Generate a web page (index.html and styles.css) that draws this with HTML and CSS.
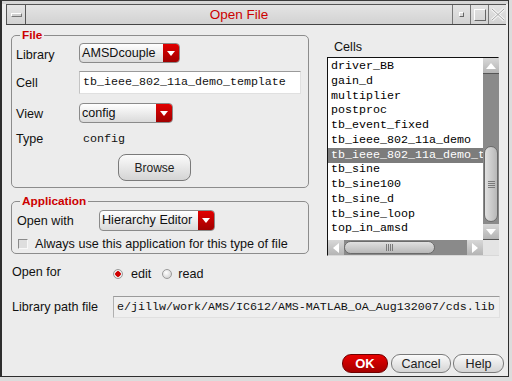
FILE: index.html
```
<!DOCTYPE html>
<html lang="en">
<head>
    <meta charset="UTF-8">
    <title>Open File</title>
    <link rel="stylesheet" href="styles.css">
</head>
<body>
    <div class="win">
        <div class="frame-top"></div>

        <!-- title bar -->
        <div class="titlebar">
            <div class="tb-menu"><span class="tb-dash"></span></div>
            <div class="tb-title">Open File</div>
            <div class="tb-btn"><span class="tb-min"></span></div>
            <div class="tb-btn"><span class="tb-max"></span></div>
            <div class="tb-btn tb-close">
                <svg width="14" height="13" viewBox="0 0 14 13">
                    <path d="M1 1 L13 12 M13 1 L1 12" stroke="#f4f4f4" stroke-width="3"/>
                    <path d="M1 1 L13 12 M13 1 L1 12" stroke="#a8a8a8" stroke-width="1"/>
                </svg>
            </div>
        </div>

        <div class="content">
            <div class="main">
                <div class="left-col">
                    <!-- File group -->
                    <div class="group file-group">
                        <div class="legend">File</div>
                        <div class="frow row-lib">
                            <span class="lbl">Library</span>
                            <div class="combo combo-lib">
                                <span class="combo-text">AMSDcouple</span>
                                <span class="combo-arrow"><svg width="8" height="5" viewBox="0 0 8 5"><path d="M0 0 H8 L4 5 Z" fill="#fff"/></svg></span>
                            </div>
                        </div>
                        <div class="frow row-cell">
                            <span class="lbl">Cell</span>
                            <div class="textfield">tb_ieee_802_11a_demo_template</div>
                        </div>
                        <div class="frow row-view">
                            <span class="lbl">View</span>
                            <div class="combo combo-view">
                                <span class="combo-text">config</span>
                                <span class="combo-arrow"><svg width="8" height="5" viewBox="0 0 8 5"><path d="M0 0 H8 L4 5 Z" fill="#fff"/></svg></span>
                            </div>
                        </div>
                        <div class="frow row-type">
                            <span class="lbl">Type</span>
                            <span class="mono type-val">config</span>
                        </div>
                        <div class="btn browse">Browse</div>
                    </div>

                    <!-- Application group -->
                    <div class="group app-group">
                        <div class="legend">Application</div>
                        <div class="frow row-open">
                            <span class="lbl lbl-wide">Open with</span>
                            <div class="combo combo-app">
                                <span class="combo-text">Hierarchy Editor</span>
                                <span class="combo-arrow"><svg width="8" height="5" viewBox="0 0 8 5"><path d="M0 0 H8 L4 5 Z" fill="#fff"/></svg></span>
                            </div>
                        </div>
                        <div class="frow row-check">
                            <span class="checkbox"></span>
                            <span>Always use this application for this type of file</span>
                        </div>
                    </div>
                </div>

                <div class="right-col">
                    <div class="cells-label">Cells</div>
                    <div class="listbox">
                        <div class="list-items mono">
                            <div class="item">driver_BB</div>
                            <div class="item">gain_d</div>
                            <div class="item">multiplier</div>
                            <div class="item">postproc</div>
                            <div class="item">tb_event_fixed</div>
                            <div class="item">tb_ieee_802_11a_demo</div>
                            <div class="item selected">tb_ieee_802_11a_demo_t</div>
                            <div class="item">tb_sine</div>
                            <div class="item">tb_sine100</div>
                            <div class="item">tb_sine_d</div>
                            <div class="item">tb_sine_loop</div>
                            <div class="item">top_in_amsd</div>
                        </div>
                        <div class="vscroll">
                            <div class="sb-arrow"><svg width="10" height="6" viewBox="0 0 10 6"><path d="M0 6 L5 0 L10 6 Z" fill="#fff"/></svg></div>
                            <div class="vtrack">
                                <div class="vthumb"><span class="grip-v"></span></div>
                            </div>
                            <div class="sb-arrow"><svg width="10" height="6" viewBox="0 0 10 6"><path d="M0 0 L10 0 L5 6 Z" fill="#fff"/></svg></div>
                        </div>
                        <div class="hscroll">
                            <div class="sb-arrow h"><svg width="6" height="10" viewBox="0 0 6 10"><path d="M6 0 L6 10 L0 5 Z" fill="#fff"/></svg></div>
                            <div class="htrack">
                                <div class="hthumb"><span class="grip-h"></span></div>
                            </div>
                            <div class="sb-arrow h"><svg width="6" height="10" viewBox="0 0 6 10"><path d="M0 0 L6 5 L0 10 Z" fill="#fff"/></svg></div>
                        </div>
                        <div class="corner"></div>
                    </div>
                </div>
            </div>

            <div class="frow row-openfor">
                <span class="lbl lbl-long">Open for</span>
                <span class="radio on"></span>
                <span class="radio-text">edit</span>
                <span class="radio"></span>
                <span class="radio-text">read</span>
            </div>

            <div class="frow row-path">
                <span class="lbl lbl-long">Library path file</span>
                <div class="pathfield mono">e/jillw/work/AMS/IC612/AMS-MATLAB_OA_Aug132007/cds.lib</div>
            </div>

            <div class="buttons">
                <div class="btn btn-ok">OK</div>
                <div class="btn btn-cancel">Cancel</div>
                <div class="btn btn-help">Help</div>
            </div>
        </div>
    </div>
</body>
</html>
```
FILE: styles.css
```
body {
    margin: 0;
    background-color: #dcdcdc;
    font-family: "Liberation Sans", Arial, sans-serif;
    font-size: 12.6px;
    color: #111;
}

.mono {
    font-family: "Liberation Mono", "Courier New", monospace;
    font-size: 11.67px;
}

.win {
    width: 509px;
    height: 377px;
    box-sizing: border-box;
    border-top: 1px solid #3a3a3a;
    border-left: 2px solid #2e2e2e;
    border-right: 1px solid #2e2e2e;
    border-bottom: 1px solid #2e2e2e;
    background-color: #ececec;
    display: flex;
    flex-direction: column;
}

.frame-top {
    height: 3px;
    background-color: #d6d6d6;
}

/* title bar */
.titlebar {
    display: flex;
    height: 19px;
    margin: 0 2px 0 4px;
    border-top: 1px solid #555;
    border-left: 1px solid #555;
    border-bottom: 1px solid #444;
    background: linear-gradient(#e4e4e4, #d2d2d2);
}

.tb-menu {
    width: 18px;
    border-right: 1px solid #555;
    display: flex;
    align-items: center;
    justify-content: center;
}

.tb-dash {
    width: 9px;
    height: 2px;
    border: 1px solid;
    border-color: #fff #777 #777 #fff;
    background-color: #cfcfcf;
}

.tb-title {
    flex: 1;
    text-align: center;
    color: #cc0000;
    font-size: 13.5px;
    line-height: 19px;
}

.tb-btn {
    width: 17px;
    border-left: 1px solid #777;
    display: flex;
    align-items: center;
    justify-content: center;
}

.tb-min {
    width: 3px;
    height: 3px;
    border: 1px solid;
    border-color: #fff #666 #666 #fff;
}

.tb-max {
    width: 10px;
    height: 10px;
    border: 1px solid;
    border-color: #fff #666 #666 #fff;
}

.tb-close {
    width: 17px;
}

/* content */
.content {
    flex: 1;
    display: flex;
    flex-direction: column;
    padding: 0 4px 3px 9px;
}

.main {
    display: flex;
}

.left-col {
    width: 298px;
}

.right-col {
    margin-left: 18px;
    padding-top: 15px;
}

.group {
    border: 1px solid #8c8c8c;
    border-radius: 5px;
    padding: 0 7px 0 4px;
}

.legend {
    display: table;
    margin: -8px 0 0 4px;
    padding: 0 2px;
    background-color: #ececec;
    color: #cc0000;
    font-weight: bold;
    font-size: 11.8px;
    line-height: 14px;
}

.file-group {
    margin-top: 10px;
    padding-bottom: 6px;
}

.app-group {
    margin-top: 13px;
    padding-bottom: 1px;
}

.frow {
    display: flex;
    align-items: center;
}

.lbl {
    width: 63px;
    flex-shrink: 0;
}

.lbl-wide {
    width: 82px;
    padding-left: 1px;
}

.row-lib { height: 20px; margin-top: 1px; }
.row-lib .lbl { padding-top: 3px; }
.row-cell { height: 23px; margin-top: 8px; }
.row-view { height: 20px; margin-top: 9px; }
.row-view .lbl { padding-top: 2px; }
.row-type { height: 16px; margin-top: 8px; }
.type-val { padding-left: 4px; }

.combo {
    height: 20px;
    box-sizing: border-box;
    display: flex;
    border: 1px solid #8a8a8a;
    border-radius: 4px;
    background: linear-gradient(#ffffff, #dadada);
    overflow: hidden;
}

.combo-text {
    flex: 1;
    padding-left: 2px;
    line-height: 18px;
}

.combo-arrow {
    width: 16px;
    background: linear-gradient(#e20000, #a00000);
    display: flex;
    align-items: center;
    justify-content: center;
}

.combo-lib { width: 101px; }
.combo-view { width: 94px; }
.combo-app { width: 116px; height: 21px; }

.textfield {
    width: 222px;
    height: 23px;
    box-sizing: border-box;
    background-color: #fff;
    border-top: 1px solid #9a9a9a;
    border-left: 1px solid #c4c4c4;
    border-right: 1px solid #e0e0e0;
    border-bottom: 1px solid #e0e0e0;
    padding-left: 3px;
    line-height: 21px;
    font-family: "Liberation Mono", "Courier New", monospace;
    font-size: 11.67px;
}

.btn {
    box-sizing: border-box;
    display: flex;
    align-items: center;
    justify-content: center;
    border: 1px solid #7a7a7a;
    background: linear-gradient(#fbfbfb, #d4d4d4);
    color: #222;
}

.browse {
    width: 73px;
    height: 27px;
    margin: 7px 0 0 102px;
    border-radius: 8px;
    font-size: 12px;
}

.row-open { height: 21px; margin-top: 2px; }
.row-check { height: 16px; margin-top: 5px; }

.checkbox {
    width: 10px;
    height: 10px;
    box-sizing: border-box;
    margin: 0 7px 0 2px;
    border: 1px solid;
    border-color: #8a8a8a #f8f8f8 #f8f8f8 #8a8a8a;
    background-color: #dedede;
}

/* list */
.cells-label {
    line-height: 14px;
    padding-left: 7px;
}

.listbox {
    margin-top: 3px;
    width: 172px;
    height: 199px;
    box-sizing: border-box;
    border: 1px solid;
    border-color: #111 #d8d8d8 #d8d8d8 #111;
    display: grid;
    grid-template-columns: 155px 16px;
    grid-template-rows: 182px 15px;
    background-color: #fff;
}

.list-items {
    overflow: hidden;
    padding-top: 1px;
    white-space: nowrap;
}

.item {
    line-height: 14.75px;
    padding-left: 3px;
    color: #000;
}

.item.selected {
    background-color: #7c7c7c;
    color: #fff;
    line-height: 15.5px;
    margin: 0 0 -0.75px;
}

.vscroll {
    display: flex;
    flex-direction: column;
    background-color: #8a8a8a;
}

.hscroll {
    display: flex;
    background-color: #8a8a8a;
}

.sb-arrow {
    height: 16px;
    flex-shrink: 0;
    display: flex;
    align-items: center;
    justify-content: center;
    background: linear-gradient(#d8d8d8, #b4b4b4);
    border-bottom: 1px solid #555;
    box-sizing: border-box;
}

.sb-arrow.h {
    width: 16px;
    height: 15px;
    border-bottom: none;
}

.vtrack {
    flex: 1;
    padding-top: 72px;
    padding-bottom: 2px;
    display: flex;
    flex-direction: column;
}

.vthumb {
    height: 76px;
    margin: 0 1px;
    box-sizing: border-box;
    border: 1px solid #6a6a6a;
    border-radius: 7px;
    background: linear-gradient(90deg, #e0e0e0, #b8b8b8);
    display: flex;
    align-items: center;
    justify-content: center;
}

.grip-v {
    width: 7px;
    height: 7px;
    background: repeating-linear-gradient(#7a7a7a 0 1px, transparent 1px 2px);
}

.htrack {
    flex: 1;
    padding-right: 32px;
    display: flex;
}

.hthumb {
    flex: 1;
    margin: 1px 0;
    box-sizing: border-box;
    border: 1px solid #6a6a6a;
    border-radius: 7px;
    background: linear-gradient(#e0e0e0, #b8b8b8);
    display: flex;
    align-items: center;
    justify-content: center;
}

.grip-h {
    width: 7px;
    height: 7px;
    background: repeating-linear-gradient(90deg, #7a7a7a 0 1px, transparent 1px 2px);
}

.corner {
    background-color: #e4e4e4;
}

/* lower rows */
.lbl-long {
    width: 102px;
    padding-left: 1px;
    box-sizing: border-box;
}

.row-openfor {
    height: 18px;
    margin-top: 9px;
}

.row-openfor .lbl {
    margin-top: -4px;
}

.radio {
    width: 10px;
    height: 10px;
    box-sizing: border-box;
    border-radius: 50%;
    border: 1px solid #9a9a9a;
    background: radial-gradient(circle at 40% 35%, #ffffff, #c8c8c8);
}

.radio.on {
    background: radial-gradient(circle, #d00000 0 2.5px, #f4f4f4 3px, #c8c8c8);
}

.radio-text {
    margin: 0 11px 0 8px;
}

.radio-text:last-child {
    margin: 0 0 0 6px;
}

.row-path {
    height: 22px;
    margin-top: 13px;
}

.pathfield {
    width: 387px;
    height: 22px;
    box-sizing: border-box;
    border: 1px solid;
    border-color: #9a9a9a #e0e0e0 #e0e0e0 #b0b0b0;
    background-color: #efefef;
    padding-left: 3px;
    line-height: 20px;
    white-space: nowrap;
    overflow: hidden;
}

.buttons {
    margin-top: auto;
    display: flex;
    justify-content: flex-end;
    gap: 2px;
}

.btn-ok,
.btn-cancel,
.btn-help {
    height: 19px;
    border-radius: 9px;
}

.btn-ok {
    width: 46px;
    margin-right: 1px;
    border-color: #700000;
    background: linear-gradient(#e80000, #a40000);
    color: #fff;
    font-weight: bold;
    font-size: 13px;
}

.btn-cancel {
    width: 60px;
}

.btn-help {
    width: 51px;
}
```
